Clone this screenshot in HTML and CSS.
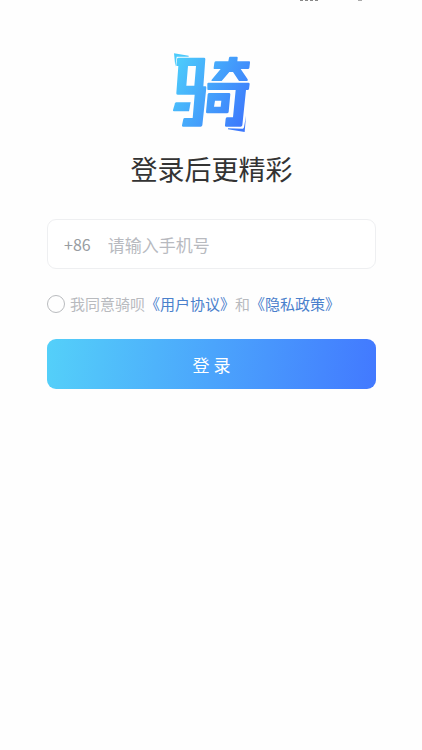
FILE: index.html
```html
<!DOCTYPE html>
<html lang="zh-CN">
<head>
<meta charset="utf-8">
<meta name="viewport" content="width=device-width, initial-scale=1">
<title>登录</title>
<link rel="stylesheet" href="styles.css">
</head>
<body>
<div class="status" aria-hidden="true"><span class="status-mark"></span><span class="status-dot"></span></div>
<main class="login">
  <svg class="logo" viewBox="36 20 240 243" role="img" aria-label="骑呗">
    <defs>
      <linearGradient id="brand" gradientUnits="userSpaceOnUse" x1="36" y1="80" x2="270" y2="200">
        <stop offset="0" stop-color="#4ccbfb"/>
        <stop offset="1" stop-color="#3d78fc"/>
      </linearGradient>
    </defs>
    <g fill="url(#brand)">
      <path d="M42 24 86 31V34H50L46 64Z"/>
      <path d="M56 37H132Q136 37 136 41L130 123H136Q139 123 139 127L127 240Q126 244 122 244H69Q65 244 66 240L70 221Q71 218 74 218H98L104 148H53Q48 148 49 143L55 62H51Q48 62 49 58L51 41Q52 37 56 37ZM84 62 79 121H103L108 62Z"/>
      <path d="M49 171H92L87 198H42Q38 198 39 194L45 174Q46 171 49 171Z"/>
      <path d="M210 34H230Q234 34 233 38L232 48H267Q271 48 270 52L268 68Q267 71 264 71H242L263 102Q265 107 261 107H237L219 80H208L185 107H157Q152 107 155 103L182 71H163Q160 71 161 67L163 52Q164 48 168 48H205L207 37Q208 34 210 34Z"/>
      <path d="M145 112H265Q269 112 269 116L267 131Q266 134 263 134H258L247 240Q246 244 242 244H198Q194 244 195 240L197 220Q198 216 202 216H219L227 134H145Q141 134 142 130V116Q142 112 145 112Z"/>
      <path fill-rule="evenodd" d="M148 143H207Q211 143 211 147L206 200Q205 204 201 204H142Q138 204 138 200L143 147Q144 143 148 143ZM165 166 162 184H182L184 166Z"/>
      <path d="M258 211 254 260 204 252V249L248 250Q251 250 252 246Z"/>
    </g>
  </svg>
  <h1 class="title">登录后更精彩</h1>
  <form class="form">
    <div class="phone">
      <label class="code" for="phone">+86</label>
      <input class="number" id="phone" type="tel" placeholder="请输入手机号">
    </div>
    <div class="agree">
      <input class="tick" id="agree" type="checkbox">
      <label for="agree">我同意骑呗</label><a href="#terms">《用户协议》</a><span>和</span><a href="#privacy">《隐私政策》</a>
    </div>
    <button class="submit" type="button">登 录</button>
  </form>
</main>
</body>
</html>
```
FILE: styles.css
```css
* {
  box-sizing: border-box;
}

body {
  margin: 0;
  background: #fefefe;
  color: #333;
  font-family: "Noto Sans CJK SC", sans-serif;
}

.status {
  display: flex;
  justify-content: flex-end;
  gap: 40px;
  height: 1px;
  padding-right: 60px;
}

.status-mark {
  width: 18px;
  border-top: 1px dashed #888;
}

.status-dot {
  width: 4px;
  background: #aaa;
}

.login {
  display: flex;
  flex-direction: column;
  align-items: center;
  padding: 51px 46px 0 47px;
}

.logo {
  width: 80px;
  height: 81px;
}

.title {
  margin: 16px 0 0;
  font-size: 27px;
  line-height: 40px;
  font-weight: 400;
}

.form {
  width: 100%;
  margin-top: 30px;
}

.phone {
  display: flex;
  align-items: center;
  gap: 17px;
  height: 50px;
  padding: 0 16px;
  border: 1px solid #eeeff1;
  border-radius: 9px;
  background: #fff;
}

.code {
  color: #989ca1;
  font-size: 16px;
}

.number {
  flex: 1;
  min-width: 0;
  padding: 0;
  border: 0;
  outline: 0;
  background: none;
  color: #333;
  font: inherit;
  font-size: 17px;
}

.number::placeholder {
  color: #b8babf;
}

.agree {
  display: flex;
  align-items: center;
  height: 24px;
  margin-top: 23px;
  color: #b8babe;
  font-size: 15px;
  line-height: 24px;
  white-space: nowrap;
}

.agree a {
  color: #4a80cc;
  text-decoration: none;
}

.tick {
  appearance: none;
  flex: none;
  width: 18px;
  height: 18px;
  margin: 0 5px 0 0;
  border: 1px solid #b9bbbe;
  border-radius: 50%;
}

.tick:checked {
  background: #4788fd;
}

.submit {
  display: block;
  width: 100%;
  height: 50px;
  margin-top: 23px;
  padding: 0;
  border: 0;
  border-radius: 9px;
  background: linear-gradient(96deg, #54d0f9, #4279ff);
  color: #fff;
  font: inherit;
  font-size: 17px;
}
```
